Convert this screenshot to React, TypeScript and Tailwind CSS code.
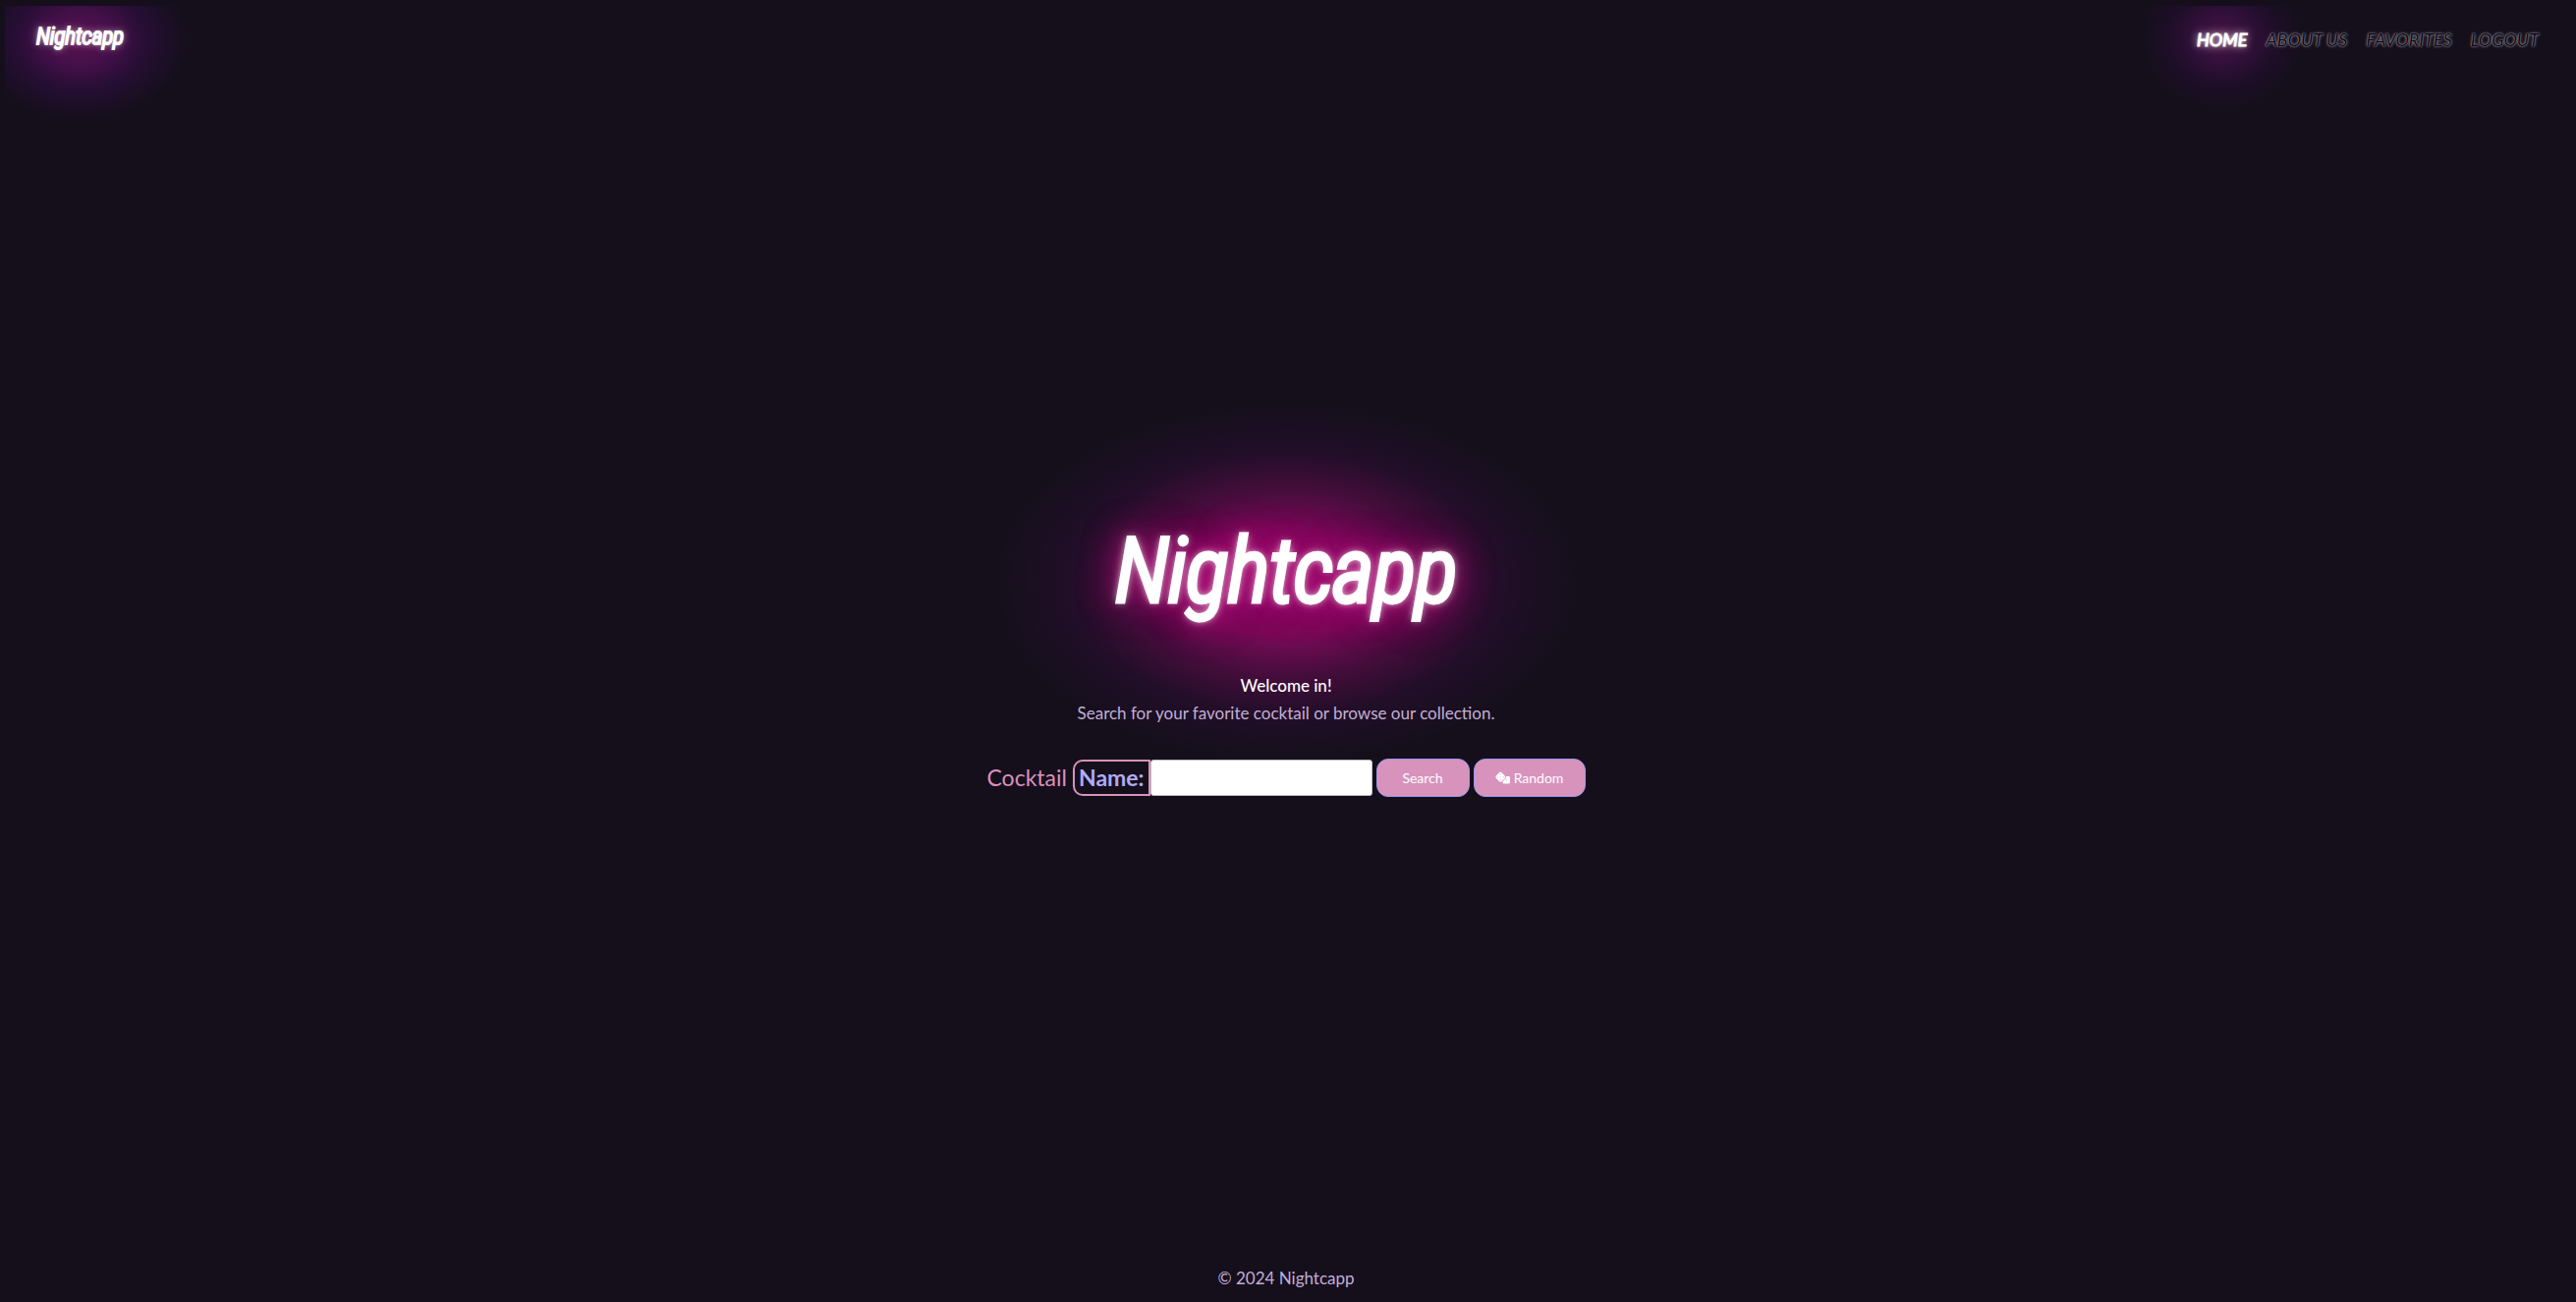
import { FaDice } from "react-icons/fa6";

const links = [
  { label: "HOME", active: true },
  { label: "ABOUT US", active: false },
  { label: "FAVORITES", active: false },
  { label: "LOGOUT", active: false },
];

function Header() {
  return (
    <header className="ml-[5px] mt-[6px] flex h-28 items-start justify-between overflow-hidden pr-[38px] italic">
      <a
        href="#"
        className="-ml-8 -mt-12 bg-[radial-gradient(closest-side,#5c124e_0%,#45104a_32%,#260e34_62%,#150f1c_100%)] px-16 pb-[68px] pt-16 font-['Roboto_Condensed',sans-serif] text-[23px] font-light leading-8 text-white [-webkit-text-stroke:2px_#fff] [stroke-linejoin:round] [text-shadow:0_0_3px_#fff,0_0_7px_#fff,0_0_14px_#ffffff66]"
      >
        Nightcapp
      </a>
      <nav className="flex gap-[19px] pt-[22px] text-[18px] leading-6">
        {links.map(({ label, active }) => (
          <a
            key={label}
            href="#"
            className={
              active
                ? "-mx-14 -mt-[60px] bg-[radial-gradient(closest-side,#4d1445_0%,#32103a_35%,#1f0e29_65%,#150f1c_100%)] px-14 pb-[58px] pt-[60px] text-white [-webkit-text-stroke:1px_#fff] [text-shadow:0_0_3px_#fff,0_0_8px_#fff,0_0_14px_#ffffff66]"
                : "relative text-[#0c0718] [text-shadow:0_0_1px_#aaa,0_0_3px_#aaa]"
            }
          >
            {label}
          </a>
        ))}
      </nav>
    </header>
  );
}

function SearchForm() {
  return (
    <form className="mt-8 flex h-10 items-center text-[23px]" onSubmit={(e) => e.preventDefault()}>
      <label htmlFor="cocktail-name" className="flex items-center">
        <span className="mr-[6px] text-[#d891bd]">Cocktail</span>
        <span className="flex h-[37px] items-center rounded-l-[10px] border-2 border-[#d891bd] px-1 font-bold text-[#b0abf4]">
          Name:
        </span>
      </label>
      <input
        id="cocktail-name"
        type="text"
        className="h-[37px] w-[226px] rounded-[3px] border border-[#b9bdb9] bg-white px-2 text-[#150f1c] outline-none"
      />
      <button
        type="submit"
        className="ml-1 h-[39px] w-[95px] rounded-[12px] border border-[#9b97ee] bg-[#d893bd] text-[14px] text-white"
      >
        Search
      </button>
      <button
        type="button"
        className="ml-1 flex h-[39px] w-[114px] items-center justify-center gap-1 rounded-[12px] border border-[#9b97ee] bg-[#d893bd] text-[14px] text-white"
      >
        <FaDice className="size-[15px]" />
        Random
      </button>
    </form>
  );
}

export default function App() {
  return (
    <div className="flex min-h-screen flex-col overflow-hidden bg-[#150f1c] font-['Lato',sans-serif]">
      <Header />
      <main className="flex flex-1 flex-col items-center justify-center pb-[92px] pr-1">
        <div className="-my-[89px] bg-[radial-gradient(closest-side,#8a0a60_0%,#780b58_30%,#460d3c_52%,#220e29_74%,#150f1c_100%)] px-[120px] pb-[111px] pt-[89px]">
          <h1 className="font-['Roboto_Condensed',sans-serif] text-[90px] font-light italic leading-[160px] text-white [-webkit-text-stroke:5px_#fff] [stroke-linejoin:round] [text-shadow:0_0_7px_#fff,0_0_12px_#ffffffaa,0_0_24px_#d0208a,0_0_42px_#c00880,0_0_42px_#a00870]">
            Nightcapp
          </h1>
        </div>
        <p className="relative text-[17px] font-medium leading-7 text-white">Welcome in!</p>
        <p className="relative text-[17px] leading-7 text-[#c3aed6]">
          Search for your favorite cocktail or browse our collection.
        </p>
        <SearchForm />
      </main>
      <footer className="pb-[10px] pr-1 text-center text-[17px] leading-7 text-[#c3aed6]">© 2024 Nightcapp</footer>
    </div>
  );
}
